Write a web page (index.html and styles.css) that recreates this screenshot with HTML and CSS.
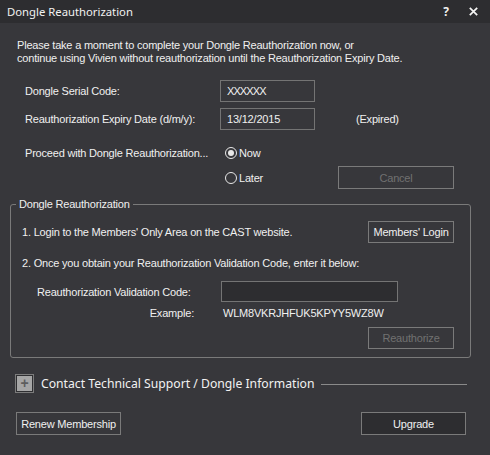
FILE: index.html
```html
<!DOCTYPE html>
<html>
<head>
<meta charset="utf-8">
<link rel="stylesheet" href="styles.css">
</head>
<body>
<div class="window">
  <div class="titlebar">
    <span class="title">Dongle Reauthorization</span>
    <span class="tb-help">?</span>
    <span class="tb-close">
      <svg width="9" height="9" viewBox="0 0 9 9"><path d="M0.8 0.8 L8.2 8.2 M8.2 0.8 L0.8 8.2" stroke="#f4f4f4" stroke-width="1.7" fill="none"/></svg>
    </span>
  </div>

  <p class="intro">Please take a moment to complete your Dongle Reauthorization now, or<br>continue using Vivien without reauthorization until the Reauthorization Expiry Date.</p>

  <div class="row row-serial">
    <span class="label">Dongle Serial Code:</span>
    <span class="field field-mask">XXXXXX</span>
  </div>
  <div class="row row-date">
    <span class="label">Reauthorization Expiry Date (d/m/y):</span>
    <span class="field">13/12/2015</span>
    <span class="expired">(Expired)</span>
  </div>

  <div class="row row-now">
    <span class="label">Proceed with Dongle Reauthorization...</span>
    <span class="radio checked"></span><span class="radio-text">Now</span>
  </div>
  <div class="row row-later">
    <span class="label"></span>
    <span class="radio"></span><span class="radio-text later-text">Later</span>
    <span class="btn btn-cancel disabled">Cancel</span>
  </div>

  <fieldset class="group">
    <legend>Dongle Reauthorization</legend>
    <div class="g-row g-login">
      <span class="g-text">1. Login to the Members' Only Area on the CAST website.</span>
      <span class="btn btn-small">Members' Login</span>
    </div>
    <div class="g-row g-step2">
      <span class="g-text">2. Once you obtain your Reauthorization Validation Code, enter it below:</span>
    </div>
    <div class="g-row g-code">
      <span class="g-label">Reauthorization Validation Code:</span>
      <span class="code-input"></span>
    </div>
    <div class="g-row g-example">
      <span class="ex-label">Example:</span>
      <span class="ex-code">WLM8VKRJHFUK5KPYY5WZ8W</span>
    </div>
    <div class="g-row g-reauth">
      <span class="btn btn-small disabled">Reauthorize</span>
    </div>
  </fieldset>

  <div class="contact">
    <span class="plus"><span class="plus-inner">+</span></span>
    <span class="contact-text">Contact Technical Support / Dongle Information</span>
    <span class="contact-line"></span>
  </div>

  <div class="bottom">
    <span class="btn btn-renew">Renew Membership</span>
    <span class="btn btn-upgrade">Upgrade</span>
  </div>
</div>
</body>
</html>
```

FILE: styles.css
```css
html, body {
  margin: 0;
  padding: 0;
  background: #37373b;
}
.window {
  width: 490px;
  height: 455px;
  background: #37373b;
  color: #f0f0f0;
  font-family: "Liberation Sans", Arial, sans-serif;
  font-size: 11px;
  letter-spacing: -0.2px;
  overflow: hidden;
}
.titlebar {
  height: 23px;
  background: #2d2d30;
  display: flex;
  align-items: center;
  font-family: "Noto Sans", "Open Sans", sans-serif;
  font-size: 11.3px;
  letter-spacing: 0;
  color: #f1f1f1;
}
.title {
  margin-left: 7px;
  flex: 1;
}
.tb-help {
  font-weight: bold;
  font-size: 12px;
  margin-right: 20px;
}
.tb-close {
  display: flex;
  margin-right: 12px;
}
.intro {
  margin: 16px 0 0 17px;
  line-height: 13px;
}
.row {
  display: flex;
  align-items: center;
}
.label {
  box-sizing: border-box;
  width: 220px;
  padding-left: 25px;
  flex: none;
}
.row-serial {
  margin-top: 15px;
  height: 22px;
}
.row-date {
  margin-top: 6px;
  height: 22px;
}
.field {
  box-sizing: border-box;
  width: 95px;
  height: 22px;
  border: 1px solid #747474;
  padding: 0 0 0 6px;
  display: flex;
  align-items: center;
  background: #37373b;
}
.field-mask {
  letter-spacing: -0.9px;
}
.expired {
  margin-left: 41px;
}
.row-now {
  margin-top: 13px;
  height: 20px;
}
.row-later {
  margin-top: 3px;
  height: 23px;
}
.radio {
  box-sizing: border-box;
  width: 12px;
  height: 12px;
  border: 1px solid #e8e8e8;
  border-radius: 50%;
  margin-left: 5px;
  position: relative;
  flex: none;
}
.radio.checked::after {
  content: "";
  position: absolute;
  left: 2px;
  top: 2px;
  width: 6px;
  height: 6px;
  border-radius: 50%;
  background: #e8e8e8;
}
.radio-text {
  margin-left: 2px;
}
.later-text {
  box-sizing: border-box;
  width: 99px;
  flex: none;
}
.btn {
  box-sizing: border-box;
  display: flex;
  align-items: center;
  justify-content: center;
  border: 1px solid #7a7a7a;
  background: #37373b;
  color: #f0f0f0;
  flex: none;
}
.btn.disabled {
  color: #717171;
}
.btn-cancel {
  width: 116px;
  height: 23px;
}
.group {
  box-sizing: border-box;
  margin: 8px 0 0 10px;
  width: 461px;
  border: 1px solid #7a7a7a;
  border-radius: 3px;
  padding: 0 16px 8px 11px;
}
.group legend {
  padding: 0 3px;
  margin-left: -6px;
  line-height: 14px;
}
.g-row {
  display: flex;
  align-items: center;
}
.g-login {
  margin-top: 10px;
  height: 22px;
  justify-content: space-between;
}
.btn-small {
  width: 86px;
  height: 22px;
}
.g-step2 {
  margin-top: 13px;
  height: 13px;
}
.g-code {
  margin-top: 12px;
  height: 21px;
}
.g-label {
  box-sizing: border-box;
  width: 199px;
  padding-left: 15px;
}
.code-input {
  box-sizing: border-box;
  width: 177px;
  height: 21px;
  border: 1px solid #747474;
  background: #2d2d30;
}
.g-example {
  margin-top: 4px;
  height: 13px;
}
.ex-label {
  box-sizing: border-box;
  width: 172px;
  text-align: right;
}
.ex-code {
  margin-left: 29px;
}
.g-reauth {
  margin-top: 8px;
  height: 22px;
  justify-content: flex-end;
}
.contact {
  display: flex;
  align-items: center;
  margin: 16px 0 0 15px;
  height: 19px;
}
.plus {
  box-sizing: border-box;
  width: 19px;
  height: 19px;
  border: 1px solid #7c7c7c;
  padding: 1px;
  background: #2f2f32;
  display: flex;
}
.plus-inner {
  flex: 1;
  background: #a6a6a6;
  color: #5e5e5e;
  font-weight: bold;
  font-size: 14px;
  line-height: 15px;
  text-align: center;
  letter-spacing: 0;
}
.contact-text {
  margin-left: 7px;
  font-family: "Noto Sans", "Open Sans", sans-serif;
  font-size: 12.2px;
  letter-spacing: 0;
  color: #f2f2f2;
}
.contact-line {
  margin-left: 7px;
  flex: 1;
  margin-right: 23px;
  height: 1px;
  background: #8a8a8a;
  margin-top: 2px;
}
.bottom {
  display: flex;
  justify-content: space-between;
  margin: 19px 24px 0 16px;
}
.btn-renew {
  width: 105px;
  height: 23px;
}
.btn-upgrade {
  width: 105px;
  height: 23px;
  background: #2d2d30;
}
```
